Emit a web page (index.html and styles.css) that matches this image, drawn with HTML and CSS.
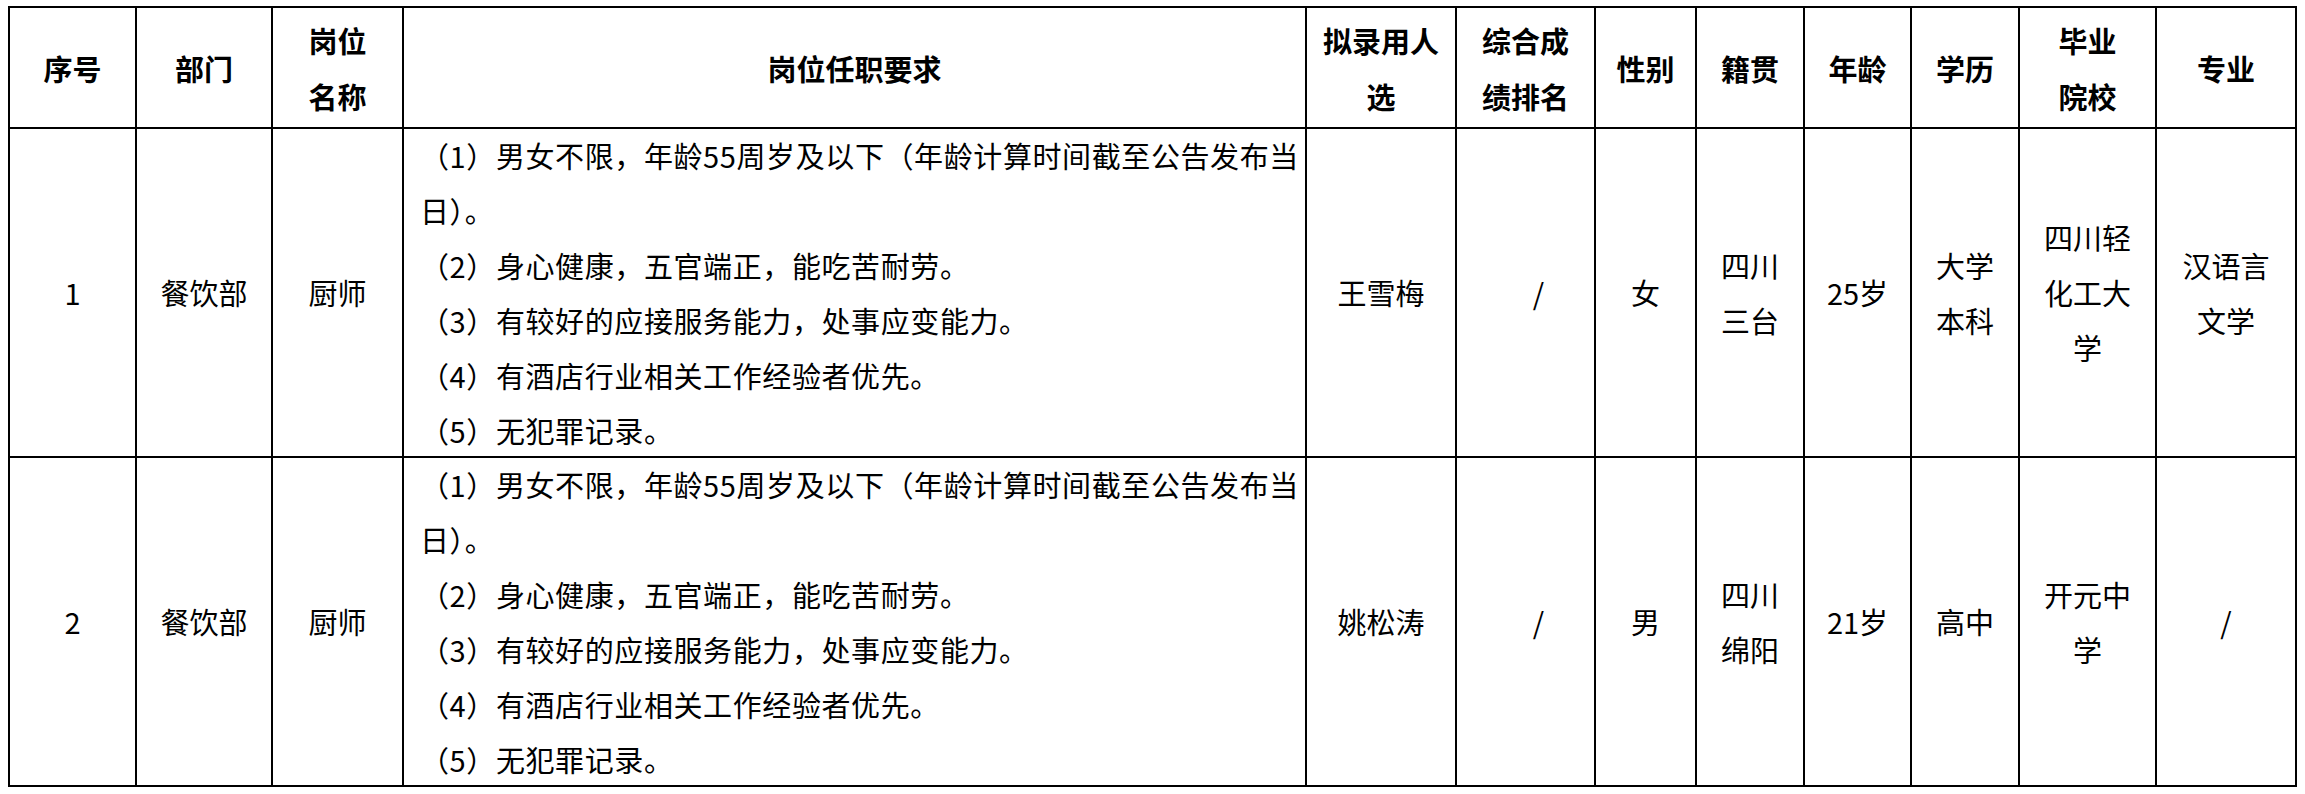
FILE: index.html
```html
<!DOCTYPE html>
<html lang="zh-CN">
<head>
<meta charset="utf-8">
<title>拟录用人选</title>
<link rel="stylesheet" href="styles.css">
</head>
<body>
<div class="sheet">
  <div class="cell head">序号</div>
  <div class="cell head">部门</div>
  <div class="cell head">岗位<br>名称</div>
  <div class="cell head">岗位任职要求</div>
  <div class="cell head">拟录用人<br>选</div>
  <div class="cell head">综合成<br>绩排名</div>
  <div class="cell head">性别</div>
  <div class="cell head">籍贯</div>
  <div class="cell head">年龄</div>
  <div class="cell head">学历</div>
  <div class="cell head">毕业<br>院校</div>
  <div class="cell head">专业</div>

  <div class="cell">1</div>
  <div class="cell">餐饮部</div>
  <div class="cell">厨师</div>
  <div class="cell req">（1）男女不限，年龄55周岁及以下（年龄计算时间截至公告发布当<br>日）。<br>（2）身心健康，五官端正，能吃苦耐劳。<br>（3）有较好的应接服务能力，处事应变能力。<br>（4）有酒店行业相关工作经验者优先。<br>（5）无犯罪记录。</div>
  <div class="cell">王雪梅</div>
  <div class="cell slash">/</div>
  <div class="cell">女</div>
  <div class="cell">四川<br>三台</div>
  <div class="cell">25岁</div>
  <div class="cell">大学<br>本科</div>
  <div class="cell">四川轻<br>化工大<br>学</div>
  <div class="cell">汉语言<br>文学</div>

  <div class="cell">2</div>
  <div class="cell">餐饮部</div>
  <div class="cell">厨师</div>
  <div class="cell req">（1）男女不限，年龄55周岁及以下（年龄计算时间截至公告发布当<br>日）。<br>（2）身心健康，五官端正，能吃苦耐劳。<br>（3）有较好的应接服务能力，处事应变能力。<br>（4）有酒店行业相关工作经验者优先。<br>（5）无犯罪记录。</div>
  <div class="cell">姚松涛</div>
  <div class="cell slash">/</div>
  <div class="cell">男</div>
  <div class="cell">四川<br>绵阳</div>
  <div class="cell">21岁</div>
  <div class="cell">高中</div>
  <div class="cell">开元中<br>学</div>
  <div class="cell">/</div>
</div>
</body>
</html>
```
FILE: styles.css
```css
html, body {
  margin: 0;
  padding: 0;
  background: #fff;
}

body {
  font-family: "Noto Sans CJK SC", "Microsoft YaHei", sans-serif;
  color: #000;
}

.sheet {
  display: grid;
  grid-template-columns: 127px 136px 131px 903px 150px 139px 101px 108px 107px 108px 137px 140px;
  grid-template-rows: 121px 329px 329px;
  width: max-content;
  margin: 6px 0 0 8px;
  border-left: 2px solid #000;
  border-top: 2px solid #000;
}

.cell {
  box-sizing: border-box;
  border-right: 2px solid #000;
  border-bottom: 2px solid #000;
  display: flex;
  align-items: center;
  justify-content: center;
  text-align: center;
  font-size: 29px;
  line-height: 55px;
  white-space: nowrap;
  overflow: hidden;
}

.head {
  font-weight: 700;
  line-height: 56px;
}

.req {
  justify-content: flex-start;
  text-align: left;
  padding-left: 16px;
  letter-spacing: 0.6px;
}

.slash {
  padding-left: 26px;
}
```
